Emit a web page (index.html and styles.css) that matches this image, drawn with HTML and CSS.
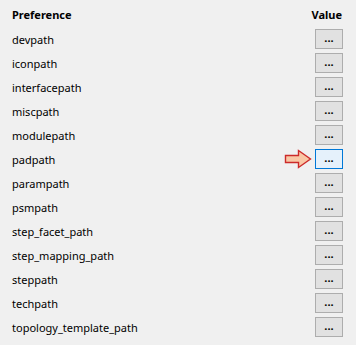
FILE: index.html
```html
<!DOCTYPE html>
<html lang="en">
<head>
    <meta charset="UTF-8">
    <title>Preferences</title>
    <link rel="stylesheet" href="styles.css">
</head>
<body>
    <div class="prefs">
        <div class="row head">
            <span class="name">Preference</span>
            <span class="value">Value</span>
        </div>
        <div class="row"><span class="name">devpath</span><button class="btn">...</button></div>
        <div class="row"><span class="name">iconpath</span><button class="btn">...</button></div>
        <div class="row"><span class="name">interfacepath</span><button class="btn">...</button></div>
        <div class="row"><span class="name">miscpath</span><button class="btn">...</button></div>
        <div class="row"><span class="name">modulepath</span><button class="btn">...</button></div>
        <div class="row">
            <span class="name">padpath</span>
            <svg class="arrow" width="28" height="20" viewBox="0 0 28 20">
                <path d="M1.5 6.5 H14.5 V1.5 L26.5 10 L14.5 18.5 V13.5 H1.5 Z" fill="#f9c7a5" stroke="#cc2a2a" stroke-width="1.4"/>
            </svg>
            <button class="btn active">...</button>
        </div>
        <div class="row"><span class="name">parampath</span><button class="btn">...</button></div>
        <div class="row"><span class="name">psmpath</span><button class="btn">...</button></div>
        <div class="row"><span class="name">step_facet_path</span><button class="btn">...</button></div>
        <div class="row"><span class="name">step_mapping_path</span><button class="btn">...</button></div>
        <div class="row"><span class="name">steppath</span><button class="btn">...</button></div>
        <div class="row"><span class="name">techpath</span><button class="btn">...</button></div>
        <div class="row"><span class="name">topology_template_path</span><button class="btn">...</button></div>
    </div>
</body>
</html>
```

FILE: styles.css
```css
body {
    margin: 0;
    background-color: #f0f0f0;
    font-family: "Noto Sans", "DejaVu Sans", sans-serif;
    font-size: 11px;
    color: #000;
}

.prefs {
    padding: 0 13px 0 12px;
}

.row {
    display: flex;
    align-items: center;
    height: 24px;
}

.row.head {
    height: 26px;
    padding-top: 1px;
    font-weight: bold;
}

.name {
    flex: 1;
}

.value {
    width: 40px;
    text-align: right;
    margin-right: 1px;
}

.arrow {
    margin-right: 3px;
}

.btn {
    width: 28px;
    height: 20px;
    padding: 0 0 3px;
    border: 1px solid #adadad;
    background-color: #e1e1e1;
    font-family: inherit;
    font-size: 11px;
    font-weight: bold;
    line-height: 1;
    color: #000;
}

.btn.active {
    border-color: #0078d7;
    background-color: #e5f1fb;
}
```
